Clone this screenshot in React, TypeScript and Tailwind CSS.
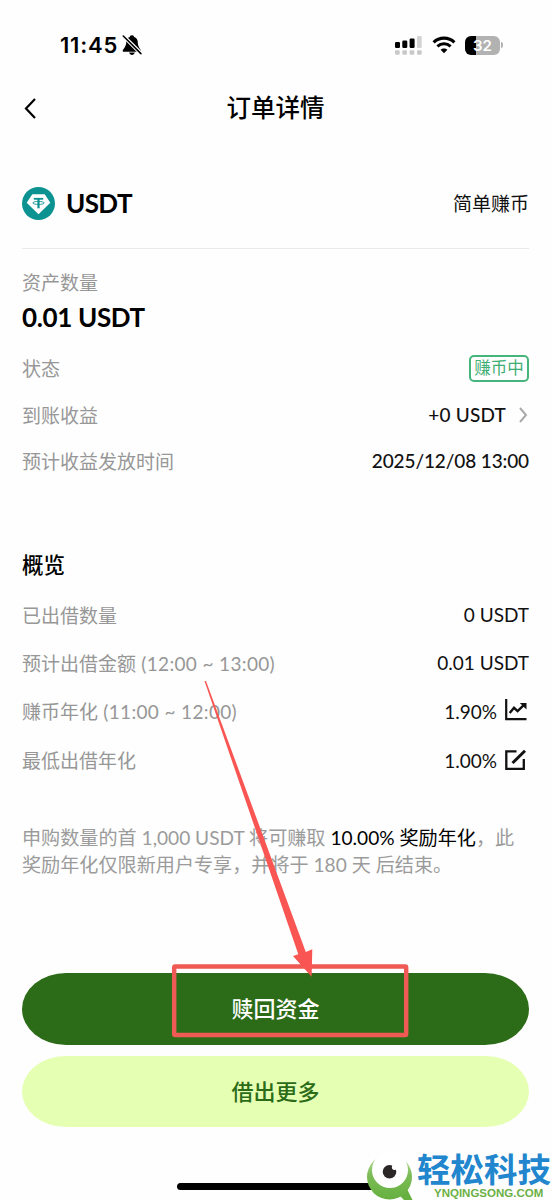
import type { ReactNode } from "react";
import { clsx } from "clsx";

interface DetailRowProps {
  label: string;
  hours?: string;
  className?: string;
  children: ReactNode;
}

function DetailRow({ label, hours, className, children }: DetailRowProps) {
  return (
    <div className={clsx("flex items-center justify-between", className)}>
      <span className="pt-[2px] text-[19px] whitespace-nowrap text-[#979797]">
        {label}
        {hours && <span className="tracking-[0.35px]"> {hours}</span>}
      </span>
      <div className="flex items-center text-[19px] whitespace-nowrap text-[#111]">{children}</div>
    </div>
  );
}

function StatusBar() {
  return (
    <div className="flex h-[90px] items-center justify-between pr-[48px] pl-[60px]">
      <div className="flex items-center gap-1">
        <span className="font-['Inter'] text-[22px] font-semibold tracking-[0.8px] text-black">11:45</span>
        <svg width="20" height="20" viewBox="0 0 20 20">
          <path
            d="M10 0.3C8.4 0.3 7.8 1.3 7.8 2C5.2 2.8 4.2 5 4.2 7.3C4.2 11.5 1.8 13.2 0.8 15.2C0.5 16 0.9 16.7 1.6 16.7H18C18.8 16.7 19.2 16 18.8 15.2C17.8 13.2 15.8 11.5 15.8 7.3C15.8 5 14.6 2.8 12.1 2C12.1 1.3 11.5 0.3 10 0.3Z"
            fill="#000"
          />
          <path d="M7.1 17.6H12.8C12.4 19.2 11.3 19.9 10 19.9S7.5 19.2 7.1 17.6Z" fill="#000" />
          <path d="M1.6 1.2L19.1 18.6" stroke="#fff" strokeWidth="3.8" />
          <path d="M1.3 1L18.9 18.6" stroke="#000" strokeWidth="1.6" strokeLinecap="round" />
        </svg>
      </div>
      <div className="flex items-center">
        {/* Dual signal */}
        <svg width="27" height="20" viewBox="0 0 27 20">
          <rect x="0" y="7" width="5" height="6" rx="1.3" />
          <rect x="7.3" y="5.5" width="5" height="7.5" rx="1.3" />
          <rect x="14.6" y="3.5" width="5" height="9.5" rx="1.3" />
          <rect x="22" y="1" width="4.7" height="12" rx="1.3" fill="#d3d3d3" />
          <g fill="#c9c9c9">
            <rect x="0" y="15.3" width="4.7" height="4.4" rx="1.2" />
            <rect x="7.3" y="15.3" width="4.7" height="4.4" rx="1.2" />
            <rect x="14.6" y="15.3" width="4.7" height="4.4" rx="1.2" />
            <rect x="22" y="15.3" width="4.7" height="4.4" rx="1.2" />
          </g>
        </svg>
        <svg className="ml-[10px]" width="24" height="18" viewBox="0 0 24 18" fill="none" stroke="#000">
          <path d="M1.6 6.3C7.4 0.7 16.6 0.7 22.4 6.3" strokeWidth="3.1" />
          <path d="M5.4 10.3C9.2 6.8 14.8 6.8 18.6 10.3" strokeWidth="3" />
          <path d="M12 17.3L8.6 13.8C10.5 12 13.5 12 15.4 13.8Z" fill="#000" stroke="none" />
        </svg>
        <div className="ml-[9px] flex h-[19px] w-[35px] items-center justify-center rounded-[6px] bg-[linear-gradient(90deg,#000_32%,#b2b2b2_32%)]">
          <span className="font-['Inter'] text-[15px] leading-none font-semibold text-white">32</span>
        </div>
        <div className="ml-px h-[6px] w-[2px] rounded-r-full bg-[#b2b2b2]" />
      </div>
    </div>
  );
}

function TetherIcon() {
  return (
    <svg width="33" height="33" viewBox="0 0 33 33">
      <circle cx="16.5" cy="16.5" r="16.5" fill="#0b9291" />
      <path d="M10.3 7.3H22.7L28.3 15.8L16.5 27.3L4.7 15.8Z" fill="#fff" />
      <g fill="none" stroke="#0b9291">
        <path d="M11.8 11.8H21.2" strokeWidth="1.8" />
        <path d="M16.5 11.5V21.3" strokeWidth="2.2" />
        <ellipse cx="16.5" cy="15.9" rx="5.7" ry="1.5" strokeWidth="0.9" />
      </g>
    </svg>
  );
}

function Annotation() {
  return (
    <svg className="pointer-events-none absolute top-0 left-0" width="551" height="1200" viewBox="0 0 551 1200">
      <rect x="174.2" y="966.5" width="232" height="68.5" rx="1" fill="none" stroke="#f05a54" strokeWidth="4.4" />
      <path d="M204.5 681L206 681L305.8 952L312.3 949.3L311.6 976.8L293 956L298.3 954.3Z" fill="#f95552" />
    </svg>
  );
}

function Watermark() {
  return (
    <div className="absolute right-0 bottom-0 flex h-[48px] w-[184px]">
      <svg className="shrink-0" width="48" height="48" viewBox="0 0 48 48">
        <defs>
          <linearGradient id="eye" x1="0" y1="0" x2="0" y2="1">
            <stop offset="0" stopColor="#c3e2a8" />
            <stop offset="0.45" stopColor="#7cbc57" />
            <stop offset="1" stopColor="#66b03f" />
          </linearGradient>
        </defs>
        <path d="M31 42L40 37L45.5 48H37Z" fill="#66b03f" />
        <circle cx="22.5" cy="25" r="22.5" fill="url(#eye)" />
        <circle cx="23" cy="18" r="18" fill="#fff" />
        <circle cx="22.5" cy="19.7" r="6.8" fill="#2b2727" />
        <circle cx="27.6" cy="15.3" r="2.7" fill="#fff" />
      </svg>
      <div className="flex flex-col pl-[2px]">
        <span className="text-[33.5px] leading-[34px] font-bold whitespace-nowrap text-[#2186cd]">轻松科技</span>
        <span className="mt-px ml-[17px] font-['Liberation_Sans'] text-[11.5px] leading-[13px] font-bold whitespace-nowrap text-[#6bb045]">
          YNQINGSONG.COM
        </span>
      </div>
    </div>
  );
}

export default function App() {
  return (
    <main className="relative h-[1200px] w-[551px] overflow-hidden bg-[#fefefe] font-['Lato','Noto_Sans_CJK_SC',sans-serif] text-black">
      <StatusBar />

      {/* Title bar */}
      <header className="flex h-[34px] items-center px-[22px] pt-[2px]">
        <svg width="16" height="24" viewBox="0 0 16 24" fill="none" stroke="#000" strokeWidth="2.2">
          <path d="M13 3L4 12.5L13 22" />
        </svg>
        <h1 className="flex-1 pr-4 text-center text-[24.5px] font-medium">订单详情</h1>
      </header>

      <div className="px-[22px]">
        <section className="mt-[34px] flex h-[91px] items-center justify-between border-b border-[#e9e9e9]">
          <div className="flex items-center gap-[11px]">
            <TetherIcon />
            <span className="text-[26px] font-bold tracking-[-0.6px]">USDT</span>
          </div>
          <span className="pt-[2px] text-[19px] text-[#111]">简单赚币</span>
        </section>

        <section>
          <div className="mt-5 flex h-7 items-center text-[19px] text-[#979797]">资产数量</div>
          <div className="flex h-10 items-center text-[26px] font-bold tracking-[-0.35px]">0.01 USDT</div>
          <DetailRow label="状态" className="mt-2 h-[46px]">
            <span className="flex h-[27px] w-[60px] items-center justify-center rounded-[5px] border-2 border-[#45b57b] text-[16.5px] text-[#3fae74]">
              赚币中
            </span>
          </DetailRow>
          <DetailRow label="到账收益" className="h-12">
            <span className="font-medium tracking-[0.2px]">+0 USDT</span>
            <svg className="ml-[13px]" width="10" height="16" viewBox="0 0 10 16" fill="none" stroke="#aaa" strokeWidth="2">
              <path d="M1 1L7 8L1 15" />
            </svg>
          </DetailRow>
          <DetailRow label="预计收益发放时间" className="h-[45px]">
            <span className="font-medium tracking-[-0.12px]">2025/12/08 13:00</span>
          </DetailRow>
        </section>

        {/* Overview */}
        <section>
          <h2 className="mt-[63px] mb-2 flex h-9 items-center pt-px text-[21.5px] font-medium">概览</h2>
          <DetailRow label="已出借数量" className="h-12">0 USDT</DetailRow>
          <DetailRow label="预计出借金额" hours="(12:00 ~ 13:00)" className="h-12">0.01 USDT</DetailRow>
          <DetailRow label="赚币年化" hours="(11:00 ~ 12:00)" className="h-[49px]">
            <span className="pt-px">1.90%</span>
            <svg className="mr-[2px] mb-[3px] ml-2" width="22" height="22" viewBox="0 0 22 22" fill="none" stroke="#111" strokeWidth="2.2">
              <path d="M1.2 0V20.2H21.5" />
              <path d="M4.7 14L9 8.8L12.6 12.2L19 5.8" strokeWidth="2.4" />
              <path d="M14.8 4H21.5V10.4Z" fill="#111" stroke="none" />
            </svg>
          </DetailRow>
          <DetailRow label="最低出借年化" className="h-[49px]">
            <span className="pt-px">1.00%</span>
            <svg className="mr-[2px] mb-[2px] ml-2" width="22" height="22" viewBox="0 0 22 22" fill="none" stroke="#111" strokeWidth="2.3">
              <path d="M11.5 2.3H1.3V19.8H18.8V10" />
              <path d="M7.5 14L20 1.8" strokeWidth="3" />
            </svg>
          </DetailRow>
        </section>

        <p className="mt-[39px] text-[19.12px] leading-[27px] whitespace-nowrap text-[#9b9b9b]">
          申购数量的首 1,000 USDT 将可赚取 <span className="text-black">10.00% 奖励年化</span>，此
          <br />
          奖励年化仅限新用户专享，并将于 180 天 后结束。
        </p>

        <div className="mt-[95px] flex flex-col gap-[11px]">
          <button className="h-[72px] rounded-[44px/36px] bg-[#2c6c18] pb-[2px] text-[22px] font-medium text-white">赎回资金</button>
          <button className="h-[71px] rounded-[44px/36px] bg-[#e5ffb3] text-[22px] font-medium text-[#2c6c18]">借出更多</button>
        </div>
      </div>

      {/* Home indicator */}
      <div className="mx-auto mt-[56px] h-[7px] w-[198px] rounded-full bg-black" />

      <Annotation />
      <Watermark />
    </main>
  );
}
